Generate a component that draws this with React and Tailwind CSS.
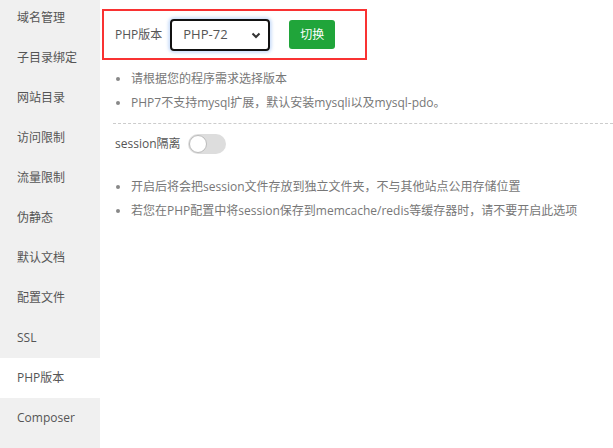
import React from 'react';

const menu = ['域名管理', '子目录绑定', '网站目录', '访问限制', '流量限制', '伪静态', '默认文档', '配置文件', 'SSL', 'PHP版本', 'Composer'];

export default function App() {
  return (
    <div
      className="flex w-[613px] h-[448px] overflow-hidden bg-white text-[12px] text-[#555]"
      style={{ fontFamily: '"Open Sans", "Noto Sans CJK SC", sans-serif' }}
    >
      {/* left menu */}
      <div className="w-[100px] shrink-0 bg-[#f0f0f0] flex flex-col -mt-[2px]">
        {menu.map((m) => (
          <div
            key={m}
            className={`h-[40px] shrink-0 flex items-center pl-[17px] ${m === 'PHP版本' ? 'bg-white' : ''}`}
          >
            {m}
          </div>
        ))}
      </div>

      {/* content */}
      <div className="flex-1 pl-[2px] pt-[9px]">
        <div className="w-[265px] h-[51px] border-2 border-[#f93232] flex items-center pl-[11px]">
          <span className="text-[#555]">PHP版本</span>
          <div className="ml-[8px] w-[100px] h-[32px] border-2 border-[#111] rounded-[4px] flex items-center justify-between pl-[11px] pr-[6px] shadow-[0_0_3px_2px_rgba(120,170,240,0.35)]">
            <span className="text-[13px] text-[#555]">PHP-72</span>
            <svg width="12" height="12" viewBox="0 0 12 12">
              <path d="M2.5 4.5 L6 8 L9.5 4.5" fill="none" stroke="#333" strokeWidth="2" />
            </svg>
          </div>
          <button className="ml-[19px] w-[46px] h-[29px] rounded-[3px] bg-[#20a53a] text-white text-[12px]">切换</button>
        </div>

        <ul className="mt-[7px] pl-[14px] text-[#777] leading-[24px]">
          <li className="flex items-center"><span className="w-[4px] h-[4px] rounded-full bg-[#888] mr-[11px]" />请根据您的程序需求选择版本</li>
          <li className="flex items-center"><span className="w-[4px] h-[4px] rounded-full bg-[#888] mr-[11px]" />PHP7不支持mysql扩展，默认安装mysqli以及mysql-pdo。</li>
        </ul>

        <div className="ml-[11px] mt-[8px] border-t border-dashed border-[#ccc]" />

        <div className="flex items-center ml-[13px] mt-[10px] h-[20px]">
          <span className="text-[#555]">session隔离</span>
          <div className="ml-[7px] w-[38px] h-[20px] rounded-full bg-[#ddd] flex items-center pl-[1px]">
            <div className="w-[18px] h-[18px] rounded-full bg-white border border-[#bbb]" />
          </div>
        </div>

        <ul className="mt-[21px] pl-[14px] text-[#777] leading-[24px]">
          <li className="flex items-center"><span className="w-[4px] h-[4px] rounded-full bg-[#888] mr-[11px]" />开启后将会把session文件存放到独立文件夹，不与其他站点公用存储位置</li>
          <li className="flex items-center"><span className="w-[4px] h-[4px] rounded-full bg-[#888] mr-[11px]" />若您在PHP配置中将session保存到memcache/redis等缓存器时，请不要开启此选项</li>
        </ul>
      </div>
    </div>
  );
}
